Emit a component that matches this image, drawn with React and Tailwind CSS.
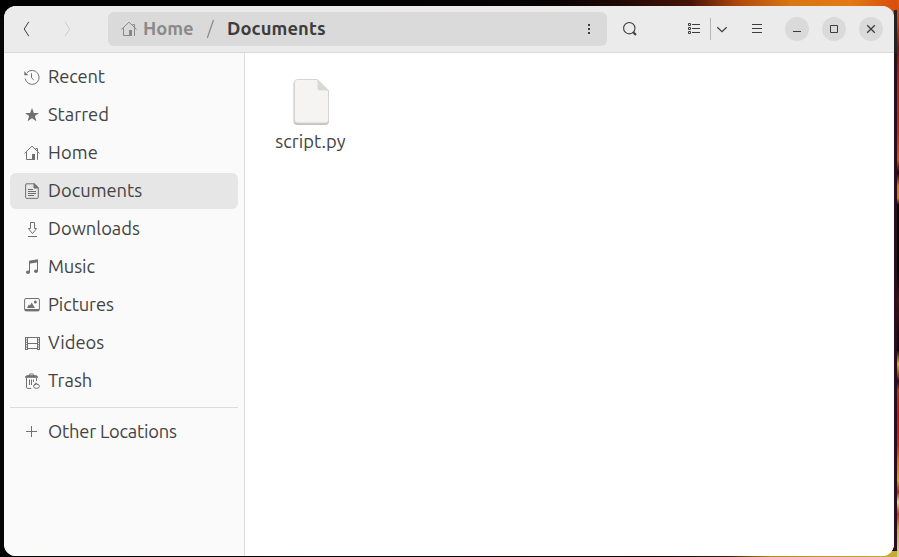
import React from "react";
import clsx from "clsx";

function Icon({ children, size = 16, className }) {
  return (
    <svg
      width={size}
      height={size}
      viewBox="0 0 16 16"
      fill="none"
      stroke="currentColor"
      strokeWidth="1"
      className={clsx("shrink-0", className)}
    >
      {children}
    </svg>
  );
}

const icons = {
  recent: (
    <>
      <path d="M2.9 3.7A7 7 0 1 1 1.2 9.6" />
      <path d="M0.3 2.2V6.2H4.4Z" fill="currentColor" stroke="none" />
      <path d="M7.5 4.3V8.8L9.8 11" />
    </>
  ),
  star: (
    <path
      d="M8 1L9.9 6H15L10.9 9L12.4 14.3L8 11.2L3.6 14.3L5.1 9L1 6H6.1Z"
      fill="currentColor"
      stroke="none"
    />
  ),
  home: (
    <>
      <path d="M0.5 8.3L8 1.2L15.5 8.3" />
      <path d="M2.5 7V14.5H10.8M13.5 7V14.9M11.5 3.5H13.5V6" />
      <path d="M8 9H11V15H8Z" fill="currentColor" stroke="none" />
    </>
  ),
  documents: (
    <>
      <path d="M2.5 0.8H10.4L14.3 4.7V14.3Q14.3 15.4 13.2 15.4H2.8Q1.6 15.4 1.6 14.3V2Q1.6 0.8 2.8 0.8Z" />
      <path d="M10 0.8V5H14.3Z" fill="currentColor" />
      <path d="M4 6.5H9M4 8.5H12M4 10.5H12M4 12.5H10" />
    </>
  ),
  downloads: (
    <>
      <path d="M6.5 1.5H10.5V7.5H12.6L8.5 12.6L4.4 7.5H6.5Z" />
      <path d="M4 15.5H13" />
    </>
  ),
  music: (
    <>
      <path d="M5 1.7L14 0.2V3.2L5 4.7Z" fill="currentColor" stroke="none" />
      <path d="M5.5 3V13M13.5 2V12" />
      <ellipse cx="4" cy="13.2" rx="2" ry="1.7" fill="currentColor" stroke="none" />
      <ellipse cx="12" cy="12.2" rx="2" ry="1.7" fill="currentColor" stroke="none" />
    </>
  ),
  pictures: (
    <>
      <rect x="0.6" y="1.5" width="14.8" height="12.4" rx="1.4" />
      <path d="M1 12H15V14H1Z" fill="currentColor" stroke="none" />
      <path d="M3 11L4.8 7.5L6 8.6L7.7 5.6L10.9 11Z" fill="currentColor" stroke="none" />
      <circle cx="11.4" cy="4.9" r="1.5" fill="currentColor" stroke="none" />
    </>
  ),
  videos: (
    <>
      <path d="M3.5 2V15M13.5 2V15M4 2.5H13M4 13.5H13M4 8.5H13" />
      <path d="M1.5 2V15M15.5 2V15" />
      <path d="M2.5 2V15M14.5 2V15" strokeDasharray="1 1.4" />
    </>
  ),
  trash: (
    <>
      <path d="M1 4.3H14M5.5 4V1.5Q5.5 1 6 1H9Q9.5 1 9.5 1.5V4" />
      <path d="M1.6 3.5L3 2.7H12L13.4 3.5Z" fill="currentColor" />
      <path d="M2.5 5V14.2Q2.5 15.4 3.7 15.4H7.3M12.5 5V8" />
      <path d="M5.5 6.5V12M7.5 6.5V12M9.5 6.5V9" />
      <ellipse cx="12.5" cy="13.3" rx="2.9" ry="2.1" />
      <path d="M9.7 12.5L12 9.8L13.6 11.4" />
    </>
  ),
  plus: <path d="M7.5 2V13M2 7.5H13" />,
};

const places = [
  { id: "recent", label: "Recent", spacing: "tracking-[-0.15px]" },
  { id: "star", label: "Starred" },
  { id: "home", label: "Home", spacing: "tracking-[0.15px]" },
  { id: "documents", label: "Documents", active: true },
  { id: "downloads", label: "Downloads" },
  { id: "music", label: "Music", spacing: "tracking-[-0.1px]" },
  { id: "pictures", label: "Pictures", spacing: "tracking-[-0.1px]" },
  { id: "videos", label: "Videos" },
  { id: "trash", label: "Trash" },
];

function Place({ id, label, spacing, active }) {
  return (
    <li
      className={clsx(
        "flex h-9 items-center gap-2 rounded-md pl-3.5",
        active && "bg-[#e6e6e6]"
      )}
    >
      <Icon className="text-[#707070]">{icons[id]}</Icon>
      <span className={clsx("pb-0.5 leading-6 whitespace-nowrap", spacing)}>{label}</span>
    </li>
  );
}

function WindowButton({ children }) {
  return (
    <button className="flex size-6 items-center justify-center rounded-full bg-[#dadada]">
      <Icon>{children}</Icon>
    </button>
  );
}

function Header() {
  return (
    <header className="flex h-[47px] shrink-0 items-start border-b border-[#d9d9d9] bg-[#ebebeb] pt-1.5 text-[#3d3d3d]">
      <div className="flex h-[34px] w-[104px] items-center pl-[15px]">
        <Icon>
          <path d="M9.8 0.8L5.2 8L9.8 15.2" />
        </Icon>
        <Icon className="ml-6 text-[#cccccc]">
          <path d="M6 0.8L10.6 8L6 15.2" />
        </Icon>
      </div>
      <div className="flex h-[34px] w-[499px] items-center rounded-md bg-[#dadada] pl-[13px] font-bold">
        <Icon className="text-[#888888]">{icons.home}</Icon>
        <span className="ml-1.5 w-[51px] whitespace-nowrap text-[#8a8a8a]">Home</span>
        <Icon className="ml-2 overflow-visible text-[#8a8a8a]">
          <path d="M5.3 17L11.5 -1" strokeWidth="1.2" />
        </Icon>
        <span className="ml-[9px] tracking-[0.1px] whitespace-nowrap">Documents</span>
        <Icon className="mr-2.5 ml-auto">
          <path d="M7 3H9V5H7ZM7 7H9V9H7ZM7 11H9V13H7Z" fill="currentColor" stroke="none" />
        </Icon>
      </div>
      <div className="flex h-[34px] items-center">
        <Icon className="ml-[15px]">
          <circle cx="7.3" cy="7.2" r="5.7" strokeWidth="1.1" />
          <path d="M11.2 11.2L14 14" strokeWidth="2" />
        </Icon>
        <Icon className="ml-12">
          <path d="M2.5 2.5H4.5V4.5H2.5ZM2.5 6.5H4.5V8.5H2.5ZM2.5 10.5H4.5V12.5H2.5Z" />
          <path d="M6 3.5H14M6 7.5H14M6 11.5H14" />
        </Icon>
        <div className="ml-2 h-[22px] w-px bg-[#b5b5b5]" />
        <Icon className="ml-[3px]">
          <path d="M3.3 6.3L8 10.7L12.7 6.3" strokeWidth="1.2" />
        </Icon>
        <Icon className="ml-[19px]">
          <path d="M3 3.5H13M3 7.5H13M3 11.5H13" />
        </Icon>
      </div>
      <div className="ml-5 flex h-[34px] items-center gap-[13px]">
        <WindowButton>
          <path d="M4 10.5H12" />
        </WindowButton>
        <WindowButton>
          <path d="M4.5 4.5H11.5V11.5H4.5Z" />
        </WindowButton>
        <WindowButton>
          <path d="M4.2 4.2L11.8 11.8M11.8 4.2L4.2 11.8" strokeWidth="1.3" />
        </WindowButton>
      </div>
    </header>
  );
}

function FileIcon() {
  return (
    <svg width="40" height="50" viewBox="0 0 40 50">
      <path d="M6 2.5H27L38 13.5V43Q38 47 34 47H6.5Q2.5 47 2.5 43V6Q2.5 2.5 6 2.5Z" fill="#c4c2bf" />
      <path
        d="M6.5 1.5H26L37.5 13V42Q37.5 45 34.5 45H6.5Q3.5 45 3.5 42V4.5Q3.5 1.5 6.5 1.5Z"
        fill="#f5f4f2"
        stroke="#d6d4d2"
      />
      <path d="M26.5 1L38 12.5H29Q26.5 12.5 26.5 10.5Z" fill="#dad8d5" />
    </svg>
  );
}

export default function App() {
  return (
    <div className="h-[557px] w-[899px] overflow-hidden bg-[#050403] bg-[linear-gradient(#20231f_0px,#20231f_42px,#2b0c23_44px,#2b0c23_541px),linear-gradient(#df5b10_0px,#c63b0e_25px,#761704_48px,#a92708_80px,#b9300a_130px,#d8510d_160px,#180400_173px,#df7810_186px,#d28510_198px,#050000_205px,#000_270px,#391304_300px,#100302_350px,#d6b91b_364px,#7e300b_377px,#29030a_381px,#a83c0c_390px,#be1808_415px,#c92b08_445px,#dc6c12_460px,#dda514_480px,#9b350c_492px,#eadc7e_502px,#c5350c_514px,#c6b03a_530px,#d4d3ac_557px),linear-gradient(90deg,#000_0px,#050303_550px,#210706_620px,#461307_690px,#b34a0c_740px,#d77613_790px,#e27a13_850px,#d74b0e_899px),linear-gradient(90deg,#050303_0px,#160404_660px,#42150d_730px,#b28a22_770px,#c6ae32_899px)] bg-[position:894px_10px,897px_0px,0px_0px,0px_551px] bg-[size:3px_541px,2px_557px,899px_18px,899px_6px] bg-no-repeat pt-1.5 pl-1 font-['Ubuntu','Noto_Sans',sans-serif] text-[18.33px] text-[#3d3d3d]">
      <div className="flex h-[550px] w-[890px] flex-col overflow-hidden rounded-xl bg-white">
        <Header />
        <div className="flex min-h-0 flex-1">
          <aside className="w-[241px] shrink-0 border-r border-[#dcdcdc] bg-[#fafafa] px-1.5 pt-1.5 text-[#434343]">
            <ul className="flex flex-col gap-0.5">
              {places.map((place) => (
                <Place key={place.id} {...place} />
              ))}
            </ul>
            <hr className="mt-2 mb-1.5 border-[#dcdcdc]" />
            <ul>
              <Place id="plus" label="Other Locations" spacing="tracking-[-0.21px]" />
            </ul>
          </aside>
          <main className="flex-1 bg-white pt-[25px] pl-4 text-[#434343]">
            <div className="flex w-[100px] flex-col items-center">
              <FileIcon />
              <span className="mt-px pr-px leading-6 tracking-[0.05px] whitespace-nowrap">script.py</span>
            </div>
          </main>
        </div>
      </div>
    </div>
  );
}
